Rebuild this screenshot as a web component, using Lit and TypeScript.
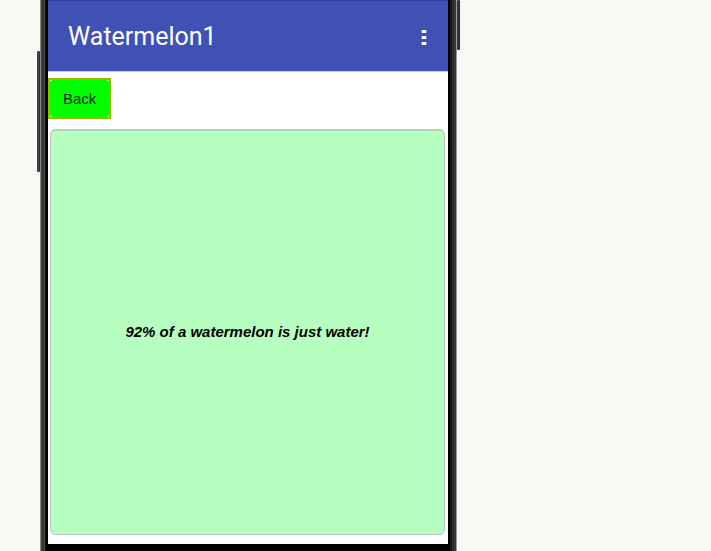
import { LitElement, html, css, svg } from "lit";
import { customElement, property } from "lit/decorators.js";

@customElement("app-bar")
class AppBar extends LitElement {
  @property() heading = "";

  static styles = css`
    :host {
      display: block;
    }
    .bar {
      display: flex;
      align-items: center;
      justify-content: space-between;
      box-sizing: border-box;
      height: 72px;
      padding: 1px 15px 0 20px;
      background: #3f51b5;
      border-top: 1px solid #303f9f;
      border-bottom: 1px solid #c9cdde;
      color: #fff;
    }
    .title {
      margin: 0;
      font: 400 25px/31px Roboto, sans-serif;
    }
    .menu {
      display: flex;
      width: 18px;
      height: 24px;
      padding: 0;
      border: 0;
      background: none;
      color: inherit;
      cursor: pointer;
    }
  `;

  render() {
    return html`
      <header class="bar">
        <h1 class="title">${this.heading}</h1>
        <button class="menu" aria-label="Menu">
          <svg width="18" height="24" viewBox="0 0 18 24" fill="currentColor">
            ${[5, 11, 17].map(
              (y) => svg`<rect x="6.6" y=${y} width="4.8" height="3" rx="0.7" />`
            )}
          </svg>
        </button>
      </header>
    `;
  }
}

@customElement("app-root")
class AppRoot extends LitElement {
  static styles = css`
    :host {
      display: block;
      min-height: 100vh;
      background: #f8f9f3;
      font-family: "Liberation Sans", Arial, sans-serif;
    }
    .device {
      display: flex;
      align-items: flex-start;
      box-sizing: border-box;
      max-width: 460px;
      padding-left: 37px;
    }
    .key {
      flex: none;
      width: 3px;
      border-radius: 1px;
      background: linear-gradient(90deg, #4a4a4a, #303030);
    }
    .volume {
      height: 121px;
      margin-top: 51px;
    }
    .power {
      height: 50px;
      background: linear-gradient(90deg, #444, #222);
    }
    .body {
      flex: 1;
      display: flex;
      box-sizing: border-box;
      height: 100vh;
      padding-bottom: 7px;
      background: #000;
    }
    .edge {
      flex: none;
      margin-bottom: -7px;
    }
    .left {
      width: 8px;
      background: linear-gradient(
        90deg,
        #8a8a8a 0 1px,
        #444 1px 2px,
        #333 2px 4px,
        #4a4a4a 4px 5px,
        #111 5px 6px,
        #000 6px
      );
    }
    .right {
      width: 9px;
      background: linear-gradient(
        90deg,
        #000 0 2px,
        #171717 2px 4px,
        #303030 4px 5px,
        #222 5px 6px,
        #444 6px 7px,
        #333 7px 8px,
        #999 8px
      );
    }
    .screen {
      flex: 1;
      display: flex;
      flex-direction: column;
      background: #fff;
    }
    .content {
      flex: 1;
      display: flex;
      flex-direction: column;
      align-items: flex-start;
      gap: 10px;
      padding: 6px 0 9px;
    }
    .back {
      display: flex;
      height: 41px;
      padding: 0;
      border: 2px solid #99b900;
      background: #fff;
      color: #0b2a0b;
      font: 15px/20px "Liberation Sans", Arial, sans-serif;
      cursor: pointer;
    }
    .face {
      display: flex;
      align-items: center;
      align-self: stretch;
      padding: 0 13px;
      border-radius: 3px;
      background: #0f0;
    }
    .fact {
      flex: 1;
      align-self: stretch;
      display: flex;
      align-items: center;
      justify-content: center;
      margin: 0 3px 0 2px;
      border: 1px solid #c4c8c4;
      border-radius: 5px;
      background: #b6ffc1;
      box-shadow: inset 0 1px 1px #a6d8ad;
      color: #000;
      font: italic bold 15px/20px "Liberation Sans", Arial, sans-serif;
    }
  `;

  render() {
    return html`
      <div class="device">
        <div class="key volume"></div>
        <div class="body">
          <div class="edge left"></div>
          <main class="screen">
            <app-bar heading="Watermelon1"></app-bar>
            <div class="content">
              <button class="back"><span class="face">Back</span></button>
              <p class="fact">92% of a watermelon is just water!</p>
            </div>
          </main>
          <div class="edge right"></div>
        </div>
        <div class="key power"></div>
      </div>
    `;
  }
}
